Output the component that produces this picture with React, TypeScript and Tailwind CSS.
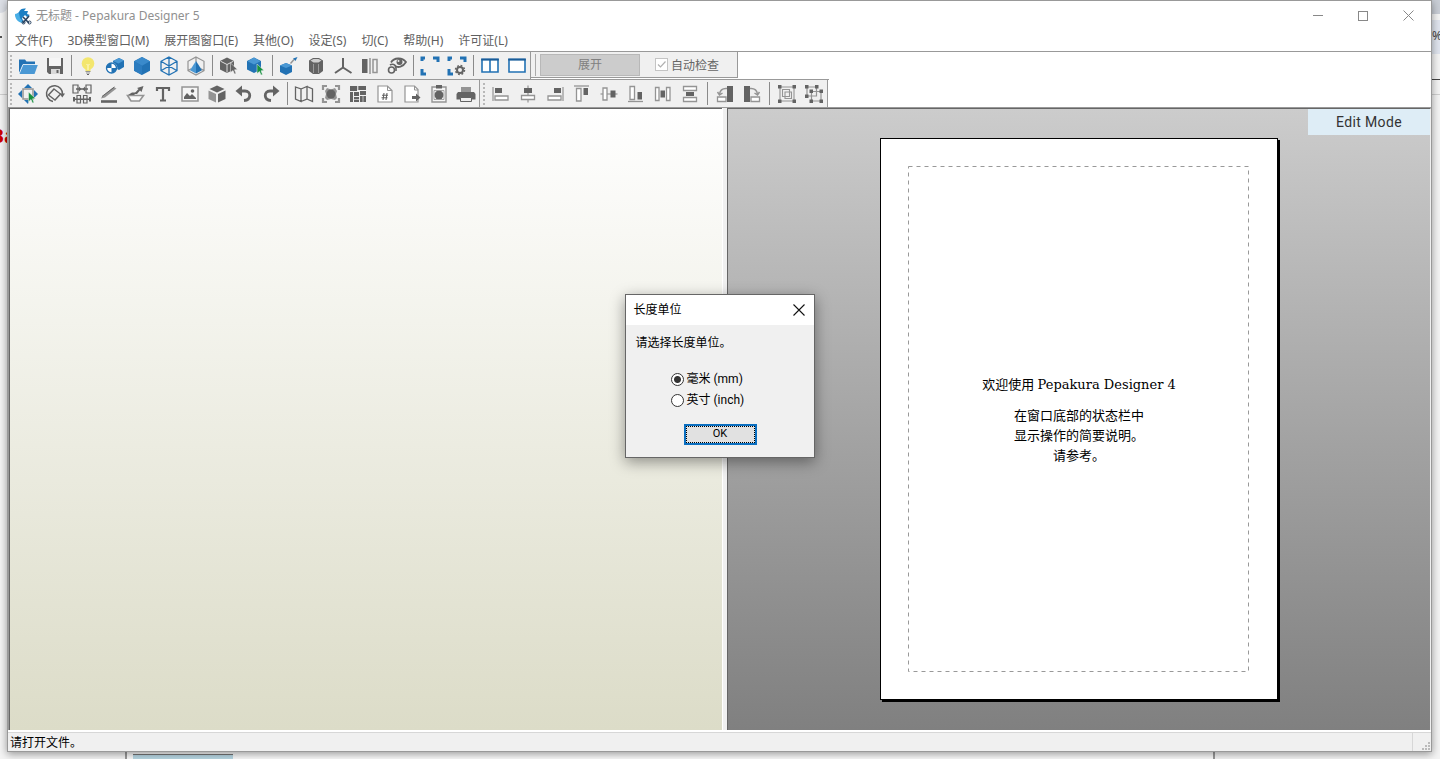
import type { ReactNode } from "react";

type Tool = { label: string; art: ReactNode };

const BLUE = "#2272b4";
const LIGHT = "#4a98d4";
const DARK = "#636363";
const MID = "#949494";

const HEX = "M10 1 18 5.3V14.7L10 19 2 14.7V5.3Z";

const fileTools: Tool[][] = [
  [
    {
      label: "Open",
      art: (
        <>
          <path d="M1 18V3.500h6l1.500 2H17V9H5Z" fill={BLUE} />
          <path d="M1 18 5 8.500h15L16.500 18Z" fill={LIGHT} />
          <path d="M1 18 5 8.500h15" fill="none" stroke="#fff" strokeWidth=".8" />
        </>
      ),
    },
    {
      label: "Save",
      art: (
        <>
          <path d="M2 2h16v16H4l-2-2Z" fill={DARK} />
          <path d="M4 2h12v8H4Z" fill="#f5f5f5" />
          <path d="M6 13h9v5H6Z" fill="#d9d9d9" />
          <path d="M11.500 14h2v3h-2Z" fill={DARK} />
        </>
      ),
    },
  ],
  [
    {
      label: "Light",
      art: (
        <>
          <circle cx="10" cy="7.500" r="6.300" fill="#f3e66e" />
          <path d="M7.500 12h5v3.500h-5Z" fill="#f3e66e" />
          <path d="M8.500 8 10 9.500 11.500 8M10 9.500V14" fill="none" stroke="#fffbd0" />
          <path d="M7.500 15.500h5M8 17h4" stroke={MID} />
          <path d="M9 18.500h2" stroke={DARK} />
        </>
      ),
    },
    {
      label: "Texture",
      art: (
        <>
          <path d="M8 5 14 2l5 2.500v6.500l-5 3-6-3Z" fill={BLUE} />
          <path d="M8 5l5.500 2.500L19 4.500 14 2Z" fill={LIGHT} />
          <circle cx="6.500" cy="12" r="5.800" fill="#fff" />
          <circle cx="6.500" cy="12" r="5" fill="#fff" stroke={BLUE} strokeWidth="1.400" />
          <path d="M6.500 12h5a5 5 0 0 1-5 5ZM6.500 12h-5a5 5 0 0 1 5-5Z" fill={BLUE} />
        </>
      ),
    },
    {
      label: "Solid",
      art: (
        <>
          <path d={HEX} fill={BLUE} />
          <path d="M2 5.300 10 1l8 4.300-8 4.500Z" fill="#3a8acb" />
          <path d="M10 9.800v9.200L2 14.700V5.300Z" fill="#2c7cbf" />
        </>
      ),
    },
    {
      label: "Wireframe",
      art: <path d={`${HEX}M10 1v18M2 5.300l16 9.400M18 5.300 2 14.700`} fill="none" stroke={BLUE} strokeWidth="1.300" />,
    },
    {
      label: "Hidden faces",
      art: (
        <>
          <path d={`${HEX}M10 1v5M2 14.700l3-2M18 14.700l-3-2`} fill="none" stroke={MID} strokeWidth="1.200" />
          <path d="M10 5v12.500L4 14.200Z" fill={LIGHT} />
          <path d="M10 5v12.500l6-3.300Z" fill={BLUE} />
        </>
      ),
    },
  ],
  [
    {
      label: "Select part",
      art: (
        <>
          <path d="M1 5 8 1.500 15 5v8.500L8 17l-7-3.500Z" fill={DARK} />
          <path d="M1.500 5.200 8 8.500l6.500-3.300M8 8.500V16.500" fill="none" stroke="#ddd" />
          <path d="m11.500 7 7 6.500-3 .3 1.500 3.700-1.500.6-1.500-3.600-2.500 2Z" fill={DARK} stroke="#eee" strokeWidth=".5" />
        </>
      ),
    },
    {
      label: "Select face",
      art: (
        <>
          <path d="M1 5 8 1.500 15 5v8.500L8 17l-7-3.500Z" fill={BLUE} />
          <path d="M1.500 5.200 8 8.500l6.500-3.300L8 1.500Z" fill={LIGHT} />
          <path d="m11 8 7 6.500-3 .3 1.500 3.700-1.500.6-1.500-3.600-2.500 2Z" fill="#16913f" stroke="#eee" strokeWidth=".5" />
        </>
      ),
    },
  ],
  [
    {
      label: "Edge color",
      art: (
        <>
          <path d="M1 9.500 7 7l6 2.500V16l-6 3-6-3Z" fill={BLUE} />
          <path d="M1 9.500 7 7l6 2.500L7 12Z" fill={LIGHT} />
          <path d="m11.500 7.500 3.500-4" stroke={MID} strokeWidth="1.500" />
          <path d="M14 2.500 18.500 1l-2 4Z" fill={BLUE} />
        </>
      ),
    },
    {
      label: "Cylinder",
      art: (
        <>
          <path d="M3 4.500 7 2h6l4 2.500V15l-4 3H7l-4-3Z" fill={DARK} />
          <path d="M4.500 4.500 7.500 3h5l3 1.500-3 2h-5Z" fill="#cfcfcf" />
          <path d="M7.500 8v9M12.500 8v9" stroke="#999" />
        </>
      ),
    },
    {
      label: "Axes",
      art: <path d="M10 2v9.500M10 11.500 2 17M10 11.500 18.500 17" fill="none" stroke={DARK} strokeWidth="2" />,
    },
    {
      label: "Mirror",
      art: (
        <>
          <path d="M2 3h5.500v14H2Z" fill={DARK} />
          <path d="M10 2v16" stroke={MID} strokeWidth="1.500" />
          <path d="M13 3.500h4v13h-4Z" fill="none" stroke={MID} strokeWidth="1.500" />
        </>
      ),
    },
    {
      label: "Visibility",
      art: (
        <>
          <path d="M4 6.500C7 1.500 15 1 19 6c-3 5-8 6-11 4" fill="none" stroke={DARK} strokeWidth="1.800" />
          <circle cx="12.500" cy="6" r="3" fill={DARK} />
          <circle cx="11.500" cy="5" r="1" fill="#eee" />
          <circle cx="4.500" cy="14" r="3" fill="none" stroke={DARK} strokeWidth="1.600" />
          <path d="M3 9c2-1.500 6-1 6 3v3" fill="none" stroke={DARK} strokeWidth="1.600" />
        </>
      ),
    },
  ],
  [
    {
      label: "Fit view",
      art: <path d="M2 5V2h3M13 2h5v4M6 18H2v-5" fill="none" stroke={BLUE} strokeWidth="3" />,
    },
    {
      label: "View settings",
      art: (
        <>
          <path d="M2 5V2h3M13 2h5v4M6 18H2v-5" fill="none" stroke={BLUE} strokeWidth="3" />
          <circle cx="13" cy="14" r="3" fill="#f0f0f0" stroke={DARK} strokeWidth="2" />
          <circle cx="13" cy="14" r="4.500" fill="none" stroke={DARK} strokeWidth="1.500" strokeDasharray="1.800 1.735" />
        </>
      ),
    },
  ],
  [
    {
      label: "Split layout",
      art: (
        <>
          <path d="M2 3.500h16v12.500H2ZM10 3.500V16" fill="#fff" stroke={BLUE} strokeWidth="1.600" />
          <path d="M1.200 3.500h17.600" stroke="#1a5c98" strokeWidth="2" />
        </>
      ),
    },
    {
      label: "Single layout",
      art: (
        <>
          <path d="M2 3.500h16v12.500H2Z" fill="#fff" stroke={BLUE} strokeWidth="1.600" />
          <path d="M1.200 3.500h17.600" stroke="#1a5c98" strokeWidth="2" />
        </>
      ),
    },
  ],
];

const editTools: Tool[][] = [
  [
    {
      label: "Move",
      art: (
        <>
          <path d="M10 0l4 4H6ZM0 10l4-4v8ZM20 10l-4-4v8ZM10 20l-4-4h5Z" fill={BLUE} />
          <path d="M5 5h10v10H5Z" fill="#f0f0f0" stroke={MID} strokeWidth="1.500" />
          <path d="m10.500 8 7 6.500-3 .3 1.500 3.700-1.500.6-1.500-3.600-2.500 2.200Z" fill="#16913f" stroke="#eee" strokeWidth=".5" />
        </>
      ),
    },
    {
      label: "Rotate",
      art: (
        <>
          <path d="M8 17.500A8 8 0 1 1 17.500 10" fill="none" stroke={DARK} strokeWidth="1.500" />
          <path d="m9 5 6.500 5L10 16 3.500 11Z" fill="none" stroke={DARK} strokeWidth="1.400" />
          <path d="M14.500 9.500H20l-2.700 4Z" fill={DARK} />
        </>
      ),
    },
    {
      label: "Join",
      art: (
        <>
          <path d="M1 1h5v8H1ZM14 1h5v8h-5ZM5 11.500h3.500v7.500H5ZM11.500 11.500H15v7.500h-3.500Z" fill="none" stroke={DARK} strokeWidth="1.200" />
          <path d="M4 5h12M1 15.200h18" stroke={DARK} strokeWidth="1.500" />
          <path d="M7 2.500 9.500 5 7 7.500ZM13 2.500 10.500 5 13 7.500ZM1 13h2v4.500H1ZM17 13h2v4.500h-2Z" fill={DARK} />
        </>
      ),
    },
    {
      label: "Draw line",
      art: (
        <>
          <path d="M3 12.500 14.500 3l3 1.500L6 13.500l-4 1Z" fill={MID} />
          <path d="M3 12.500 15.500 3" stroke={DARK} />
          <path d="M2 17.500h16" stroke={DARK} strokeWidth="2.600" />
        </>
      ),
    },
    {
      label: "Flaps",
      art: (
        <>
          <path d="M17.500 2 11 4l1.500 1-4.500 5h3l3-3.500L15.500 8Z" fill={DARK} />
          <path d="M1.500 11.500h16l-4 5.500H5Z" fill="#f8f8f8" stroke={MID} strokeWidth="1.600" />
          <path d="M2 11l4-2.500h5L8 11Z" fill={DARK} />
        </>
      ),
    },
    {
      label: "Text",
      art: <path d="M4 3v4M16 3v4M3 4h14M10 4v12.500M7 16.500h6" fill="none" stroke={DARK} strokeWidth="2.200" />,
    },
    {
      label: "Image",
      art: (
        <>
          <path d="M2 3h16v14H2Z" fill="#f5f5f5" stroke={MID} strokeWidth="1.500" />
          <path d="M4 15v-2l3-4 3 3 2-2 4 4v1Z" fill={DARK} />
          <circle cx="12.500" cy="7" r="1.800" fill={DARK} />
        </>
      ),
    },
    {
      label: "3D part",
      art: (
        <>
          <path d="M10 1.500 17.500 5 10 8.500 2.500 5Z" fill={DARK} />
          <path d="M1.500 6.500 9 10v8.500L1.500 15Z" fill={MID} />
          <path d="M18.500 6.500 11 10v8.500l7.500-3.500Z" fill={DARK} />
        </>
      ),
    },
    {
      label: "Undo",
      art: (
        <>
          <path d="M6 7h5c6.500 0 6.500 9-1 9.500" fill="none" stroke={DARK} strokeWidth="2.800" />
          <path d="M1.500 7 8 1.500v11Z" fill={DARK} />
        </>
      ),
    },
    {
      label: "Redo",
      art: (
        <>
          <path d="M14 7H9c-6.500 0-6.500 9 1 9.500" fill="none" stroke={DARK} strokeWidth="2.800" />
          <path d="M18.500 7 12 1.500v11Z" fill={DARK} />
        </>
      ),
    },
  ],
  [
    {
      label: "Pages",
      art: <path d="M1.500 3 7 5v12.500L1.500 15ZM7 5l6-2.500V15l-6 2.500M13 2.500 18.500 5v12.500L13 15" fill="none" stroke={DARK} strokeWidth="1.300" />,
    },
    {
      label: "Fit pattern",
      art: (
        <>
          <path d="M2 6V2h4M14 2h4v4M6 18H2v-4M18 14v4h-4" fill="none" stroke={MID} strokeWidth="2.200" />
          <path d="M6 4 10 5.500 14 4l2 3-1 3 1 4-2 2-4-1-4 1-2-2 1-4-1-3Z" fill={MID} />
          <circle cx="10" cy="10" r="4.500" fill={DARK} />
        </>
      ),
    },
    {
      label: "Arrange",
      art: (
        <>
          <path d="M2 2h7v5H2ZM10 2h8v4h-8ZM2 8h3v10H2ZM6 8h5v4H6ZM12 7h6v4h-6ZM6 13h5v5H6ZM12 12h6v6h-6Z" fill={DARK} />
          <path d="M10 2v4M6 15.500h5M15 12v6" stroke="#bbb" />
        </>
      ),
    },
    {
      label: "Page number",
      art: (
        <>
          <path d="M3 2h9.500L17 6.500V18H3Z" fill="#fff" stroke={MID} strokeWidth="1.200" />
          <path d="M12.500 2v4.500H17" fill="none" stroke={MID} />
          <path d="M9 9l-1 7M12 9l-1 7M7 11.200h6M6.500 13.800h6" stroke={DARK} strokeWidth="1.100" />
        </>
      ),
    },
    {
      label: "Export page",
      art: (
        <>
          <path d="M3 2h9.500L16 5.500V18H3Z" fill="#fff" stroke={MID} strokeWidth="1.200" />
          <path d="M12.500 2v4H16" fill="none" stroke={MID} />
          <path d="M10 12h4V9.500l4.500 4L14 17.500V15h-4Z" fill={DARK} />
        </>
      ),
    },
    {
      label: "Copy picture",
      art: (
        <>
          <path d="M3 3h14v15H3Z" fill="#f5f5f5" stroke={MID} strokeWidth="1.400" />
          <path d="M7 1h6v3.500H7Z" fill={DARK} />
          <circle cx="10" cy="11" r="4.500" fill={DARK} />
          <path d="M5 6.500h10v9H5Z" fill="none" stroke={MID} strokeWidth=".8" />
        </>
      ),
    },
    {
      label: "Print",
      art: (
        <>
          <path d="M5 3h10v5H5Z" fill={MID} />
          <path d="M2 8h16l1.500 2v5.500H.5V10Z" fill={DARK} />
          <path d="M4.500 13.500h11v4h-11Z" fill="#eee" stroke={DARK} />
        </>
      ),
    },
  ],
];

const alignTools: Tool[][] = [
  [
    {
      label: "Align left",
      art: (
        <>
          <path d="M2 3v14" stroke={MID} strokeWidth="1.200" />
          <path d="M4 4h7v5H4Z" fill={DARK} />
          <path d="M4 12h13v4H4Z" fill="#fff" stroke={MID} strokeWidth="1.300" />
        </>
      ),
    },
    {
      label: "Align center",
      art: (
        <>
          <path d="M10 1.500v17" stroke={MID} strokeWidth="1.200" />
          <path d="M6 4h8v5H6Z" fill={DARK} />
          <path d="M3.500 11.500h13v4h-13Z" fill="#fff" stroke={MID} strokeWidth="1.300" />
        </>
      ),
    },
    {
      label: "Align right",
      art: (
        <>
          <path d="M18 3v14" stroke={MID} strokeWidth="1.200" />
          <path d="M9 4h7v5H9Z" fill={DARK} />
          <path d="M3 12h13v4H3Z" fill="#fff" stroke={MID} strokeWidth="1.300" />
        </>
      ),
    },
    {
      label: "Align top",
      art: (
        <>
          <path d="M2 2h15" stroke={MID} strokeWidth="1.300" />
          <path d="M11.500 4H16v7h-4.500Z" fill={DARK} />
          <path d="M4.500 4.500H9V17H4.500Z" fill="#fff" stroke={MID} strokeWidth="1.300" />
        </>
      ),
    },
    {
      label: "Align middle",
      art: (
        <>
          <path d="M1.500 10h17" stroke={MID} strokeWidth="1.200" />
          <path d="M11.500 6.500h5v7h-5Z" fill={DARK} />
          <path d="M4 4h4v12H4Z" fill="#fff" stroke={MID} strokeWidth="1.300" />
        </>
      ),
    },
    {
      label: "Align bottom",
      art: (
        <>
          <path d="M2 17.500h15" stroke={MID} strokeWidth="1.300" />
          <path d="M11.500 8H16v7.500h-4.500Z" fill={DARK} />
          <path d="M4 2.500h4.500v13H4Z" fill="#fff" stroke={MID} strokeWidth="1.300" />
        </>
      ),
    },
    {
      label: "Distribute horizontally",
      art: (
        <>
          <path d="M2.500 3.500H6v13H2.500ZM13.500 3.500H17v13h-3.500Z" fill="#fff" stroke={MID} strokeWidth="1.300" />
          <path d="M7.500 6.500H12v7H7.500Z" fill={DARK} />
        </>
      ),
    },
    {
      label: "Distribute vertically",
      art: (
        <>
          <path d="M3.500 2.500h13v4h-13ZM3.500 13.500h13v4h-13Z" fill="#fff" stroke={MID} strokeWidth="1.300" />
          <path d="M6 8h8v4H6Z" fill={DARK} />
        </>
      ),
    },
  ],
  [
    {
      label: "Rotate left",
      art: (
        <>
          <path d="M12 2h6v16h-6Z" fill={DARK} />
          <path d="M2.500 13H11v4.500H2.500Z" fill="#fff" stroke={MID} strokeWidth="1.300" />
          <path d="M12 4.500C7 4 5 7 4.500 10M2.500 8l2 3 3-2" fill="none" stroke={MID} strokeWidth="1.500" />
        </>
      ),
    },
    {
      label: "Rotate right",
      art: (
        <>
          <path d="M2 2h6v16H2Z" fill={DARK} />
          <path d="M9 13h8.500v4.500H9Z" fill="#fff" stroke={MID} strokeWidth="1.300" />
          <path d="M8 4.500C13 4 15 7 15.500 10M17.500 8l-2 3-3-2" fill="none" stroke={MID} strokeWidth="1.500" />
        </>
      ),
    },
  ],
  [
    {
      label: "Group",
      art: (
        <>
          <path d="M3 3h14v14H3ZM5.500 5.500h7v7h-7ZM8 8h6.500v6.500H8Z" fill="none" stroke={MID} strokeWidth="1.100" />
          <path d="M1 1h3.500v3.500H1ZM15.500 1H19v3.500h-3.500ZM1 15.500h3.500V19H1ZM15.500 15.500H19V19h-3.500Z" fill={DARK} />
        </>
      ),
    },
    {
      label: "Ungroup",
      art: (
        <>
          <path d="M3 3h9.500v9H3ZM7.500 7.500H17V17H7.500Z" fill="none" stroke={MID} strokeWidth="1.200" />
          <path d="M1 1h3.500v3.500H1ZM11 1h3.500v3.500H11ZM1 10.500h3.500V14H1ZM5.500 5.500H9V9H5.500ZM15.500 5.500H19V9h-3.500ZM5.500 15.500H9V19H5.500ZM15.500 15.500H19V19h-3.500Z" fill={DARK} />
        </>
      ),
    },
  ],
];

const menus = ["文件(F)", "3D模型窗口(M)", "展开图窗口(E)", "其他(O)", "设定(S)", "切(C)", "帮助(H)", "许可证(L)"];

function Grip() {
  return (
    <div className="flex w-[6px] shrink-0 flex-col items-center justify-center gap-[2px]">
      {[0, 1, 2, 3, 4, 5].map((n) => (
        <span key={n} className="h-[2px] w-[2px] bg-[#b8b8b8]" />
      ))}
    </div>
  );
}

function ToolButton({ tool }: { tool: Tool }) {
  return (
    <button type="button" aria-label={tool.label} className="flex w-[27px] shrink-0 items-center justify-center">
      <svg viewBox="0 0 20 20" className="h-5 w-5" aria-hidden="true">
        {tool.art}
      </svg>
    </button>
  );
}

function ToolGroups({ groups, wide = false }: { groups: Tool[][]; wide?: boolean }) {
  return (
    <>
      {groups.map((group, i) => (
        <div key={i} className="flex">
          {i > 0 && (
            <div className={wide ? "flex w-2 justify-center py-[2px]" : "flex w-[6px] justify-center py-[2px]"}>
              <span className="w-px bg-[#8a8a8a]" />
            </div>
          )}
          {group.map((tool) => (
            <ToolButton key={tool.label} tool={tool} />
          ))}
        </div>
      ))}
    </>
  );
}

function TitleBar() {
  return (
    <header className="flex h-[29px] items-center bg-white pl-[6px]">
      <svg viewBox="0 0 18 18" className="h-[18px] w-[18px]" aria-hidden="true">
        <path d="M5 5C6 2 9 1 12 1.500L10 4l4 0-1 3 3 1-3 2-2-2-3 3 2 5-5-2-2-4-2-1Z" fill="#1b7fc4" />
        <path d="M1 7l4-1 1 5 4 5C5 16 1 13 1 7Z" fill="#49aee6" />
        <path d="M9 10l6 6M15 9l-6 7" stroke="#27425f" strokeWidth="1.600" />
        <circle cx="9.500" cy="15.500" r="1.500" fill="none" stroke="#27425f" />
        <circle cx="15.500" cy="15.500" r="1.500" fill="none" stroke="#27425f" />
      </svg>
      <h1 className="ml-1 text-xs text-[#909090]">无标题 - Pepakura Designer 5</h1>
      <div className="ml-auto flex self-stretch">
        <button type="button" aria-label="Minimize" className="flex w-[45px] items-center justify-center">
          <span className="h-px w-[10px] bg-[#888]" />
        </button>
        <button type="button" aria-label="Maximize" className="flex w-[45px] items-center justify-center">
          <span className="h-[10px] w-[10px] border border-[#888]" />
        </button>
        <button type="button" aria-label="Close" className="flex w-[46px] items-center justify-center">
          <svg viewBox="0 0 11 11" className="h-[11px] w-[11px]" aria-hidden="true">
            <path d="M.5.500l10 10M10.500.500l-10 10" stroke="#888" />
          </svg>
        </button>
      </div>
    </header>
  );
}

function Toolbars() {
  return (
    <div className="bg-white">
      <div className="flex h-[28px] w-max border-b border-[#999] bg-white pr-[91px]">
        <div role="toolbar" aria-label="3D" className="flex border-r border-[#999] bg-[#f0f0f0] py-px">
          <Grip />
          <ToolGroups groups={fileTools} />
        </div>
        <div role="toolbar" aria-label="Unfold" className="flex h-[26px] w-[207px] items-center self-start border-r border-b border-[#999] bg-[#f0f0f0] pl-1">
          <span className="mr-1 h-[22px] w-px bg-[#aaa]" />
          <button type="button" disabled className="h-[22px] w-[100px] border border-[#b8b8b8] bg-[#cccccc] text-xs text-[#808080]">
            展开
          </button>
          <label className="ml-[15px] flex items-center gap-[3px] text-xs whitespace-nowrap text-[#666]">
            <span className="relative flex h-[13px] w-[13px]">
              <input type="checkbox" defaultChecked disabled className="h-[13px] w-[13px] appearance-none border border-[#c4c4c4] bg-white" />
              <svg viewBox="0 0 13 13" className="absolute inset-0 h-[13px] w-[13px]" aria-hidden="true">
                <path d="M3 6.500 5.500 9 10.500 3.500" fill="none" stroke="#b0b0b0" strokeWidth="1.200" />
              </svg>
            </span>
            <span className="pt-[2px]">自动检查</span>
          </label>
        </div>
      </div>
      <div className="flex h-[27px] w-max border-r border-[#999] bg-[#f0f0f0]">
        <div role="toolbar" aria-label="Pattern" className="flex border-r border-[#999]">
          <Grip />
          <ToolGroups groups={editTools} />
        </div>
        <div role="toolbar" aria-label="Alignment" className="flex pl-px">
          <Grip />
          <ToolGroups groups={alignTools} wide />
        </div>
      </div>
    </div>
  );
}

function PatternPane() {
  return (
    <section className="relative flex flex-[704_1_0%] items-center justify-center border-t border-r border-l border-t-[#666] border-r-[#f0f0f0] border-l-[#666] bg-linear-to-b from-[#cccccc] to-[#808080]">
      <div className="absolute top-0 right-0 flex h-[26px] w-[122px] items-center justify-center bg-[#deedf6] font-['Roboto','Liberation_Sans',sans-serif] text-sm tracking-wide text-[#333]">
        Edit Mode
      </div>
      <div className="relative mb-[2px] flex aspect-[398/562] w-[57%] max-w-[398px] flex-col items-center border border-black bg-white pt-[235px] text-[13px] leading-5 text-black shadow-[2px_2px_0_#000]">
        <svg className="pointer-events-none absolute inset-[27px]" width="341" height="506" aria-hidden="true">
          <path d="M.5.500H340.500V505.500H.5Z" fill="none" stroke="#999" strokeDasharray="4 4" />
        </svg>
        <p className="mb-[10px]">
          欢迎使用 <span className="font-['DejaVu_Serif',serif]">Pepakura Designer 4</span>
        </p>
        <p>在窗口底部的状态栏中</p>
        <p>显示操作的简要说明。</p>
        <p>请参考。</p>
      </div>
    </section>
  );
}

function UnitDialog() {
  return (
    <div className="absolute inset-0 flex items-center justify-center">
      <form
        role="dialog"
        aria-labelledby="unit-title"
        className="flex h-[164px] w-[190px] flex-col border border-[#666] bg-[#f0f0f0] font-['Roboto','Noto_Sans_CJK_SC',sans-serif] text-xs text-black shadow-[0_4px_14px_rgba(0,0,0,0.4)]"
      >
        <div className="flex h-[30px] items-center justify-between bg-white pr-[9px] pl-2">
          <h2 id="unit-title">长度单位</h2>
          <button type="button" aria-label="Close">
            <svg viewBox="0 0 12 12" className="h-3 w-3" aria-hidden="true">
              <path d="M.5.500l11 11M11.500.500l-11 11" stroke="#111" strokeWidth="1.100" />
            </svg>
          </button>
        </div>
        <fieldset className="flex flex-col pt-[9px]">
          <legend className="contents">
            <span className="pl-[10px] leading-[18px]">请选择长度单位。</span>
          </legend>
          <div className="flex flex-col gap-[3px] pt-[18px] pl-[45px] leading-[18px]">
            <label className="flex items-center gap-[3px]">
              <input type="radio" name="unit" defaultChecked className="h-[13px] w-[13px] appearance-none rounded-full border border-[#333] bg-white bg-[radial-gradient(circle,#333_3px,transparent_4px)]" />
              毫米 (mm)
            </label>
            <label className="flex items-center gap-[3px]">
              <input type="radio" name="unit" className="h-[13px] w-[13px] appearance-none rounded-full border border-[#333] bg-white" />
              英寸 (inch)
            </label>
          </div>
        </fieldset>
        <button type="button" className="mt-auto mb-3 ml-[58px] flex h-[21px] w-[73px] border-2 border-[#0b6fc0] bg-[#e1e1e1] text-[11px]">
          <span className="flex h-full w-full items-center justify-center border border-dotted border-black">OK</span>
        </button>
      </form>
    </div>
  );
}

function Desktop() {
  return (
    <>
      <div className="absolute top-0 right-0 h-[14px] w-2 bg-[#c9ced6]" />
      <div className="absolute top-[20px] right-0 h-[34px] w-2 overflow-hidden bg-[#dfe4ee]">
        <span className="absolute top-2 left-0 text-xs text-[#444]">%</span>
      </div>
      <div className="absolute top-[79px] right-0 h-px w-2 bg-[#444]" />
      <div className="absolute top-[94px] left-0 h-px w-full bg-[#d0d0d0]" />
      <div className="absolute top-0 left-0 h-[13px] w-2 rounded-br-lg bg-[#dcdfe6]" />
      <div className="absolute top-[36px] left-0 h-[2px] w-[2px] bg-[#555]" />
      <div className="absolute top-[122px] left-0 h-7 w-2 overflow-hidden">
        <span className="absolute right-[-8px] text-xl font-bold text-[#d00000]">Ba</span>
      </div>
      <div className="absolute bottom-0 left-[125px] h-[7px] w-[1090px] border-x-2 border-[#999] bg-[#fafafa]">
        <div className="mt-[2px] ml-[6px] h-[5px] w-[100px] border-t border-[#777] bg-[#b9d8e4]" />
      </div>
    </>
  );
}

export default function App() {
  return (
    <div className="relative flex min-h-screen flex-col overflow-hidden bg-[#f4f4f4] pr-2 pb-[7px] pl-[7px] font-['Noto_Sans','Noto_Sans_CJK_SC',sans-serif]">
      <Desktop />
      <div className="relative flex flex-1 flex-col border border-[#999] bg-[#f0f0f0] shadow-[0_2px_8px_rgba(0,0,0,0.4)]">
        <TitleBar />
        <nav className="flex h-[22px] items-center gap-[15px] border-b border-[#999] bg-white pl-[7px] text-xs text-[#606060]">
          {menus.map((m) => (
            <button type="button" key={m} className="whitespace-nowrap">
              {m}
            </button>
          ))}
        </nav>
        <Toolbars />
        <main className="flex flex-1 items-stretch border-t border-l border-[#999]">
          <section aria-label="3D" className="flex-[714_1_0%] border-t border-l border-[#666] bg-linear-to-b from-white to-[#dcdcc8]" />
          <div className="w-[5px] border-l border-white bg-[#f0f0f0]" />
          <PatternPane />
        </main>
        <footer className="flex h-[21px] items-stretch border-t-2 border-t-[#fff] text-xs text-black">
          <span className="flex flex-1 items-center border-t border-[#d7d7d7] pt-[2px] pl-[2px]">请打开文件。</span>
          <div className="flex w-[19px] items-end justify-end border-t border-l border-[#d7d7d7] pr-px pb-px">
            <svg viewBox="0 0 8 8" className="h-2 w-2" aria-hidden="true">
              <path d="M6 0h2v2H6ZM3 3h2v2H3ZM6 3h2v2H6ZM0 6h2v2H0ZM3 6h2v2H3ZM6 6h2v2H6Z" fill="#bbb" />
            </svg>
          </div>
        </footer>
        <UnitDialog />
      </div>
    </div>
  );
}
